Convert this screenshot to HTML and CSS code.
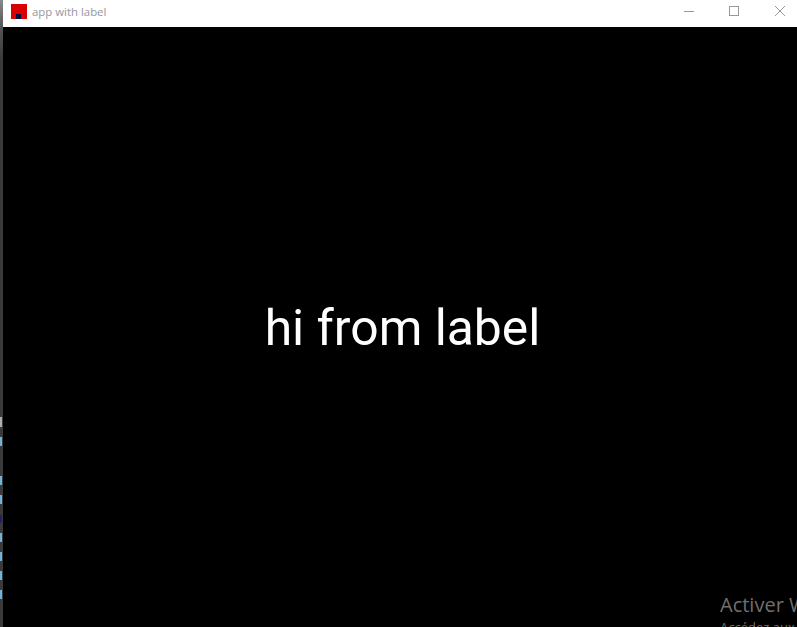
FILE: index.html
```html
<!DOCTYPE html>
<html lang="en">
<head>
<meta charset="utf-8">
<title>app with label</title>
<link rel="stylesheet" href="styles.css">
</head>
<body>
<div class="desktop-strip">
  <span class="mark mark-1"></span>
  <span class="mark mark-2"></span>
  <span class="mark mark-3"></span>
  <span class="mark mark-4"></span>
  <span class="mark mark-5"></span>
  <span class="mark mark-6"></span>
  <span class="mark mark-7"></span>
  <span class="mark mark-8"></span>
  <span class="mark mark-9"></span>
</div>
<div class="window">
  <header class="titlebar">
    <svg class="app-icon" width="16" height="15" viewBox="0 0 16 15"><rect width="16" height="15" fill="#d80000"/><rect x="5" y="10" width="5" height="5" fill="#0a0a40"/></svg>
    <span class="title">app with label</span>
    <div class="controls">
      <svg class="ctl-min" width="12" height="12" viewBox="0 0 12 12"><path d="M1 6.5h10" stroke="#999" fill="none"/></svg>
      <svg width="12" height="12" viewBox="0 0 12 12"><rect x="1.5" y="1.5" width="9" height="9" stroke="#999" fill="none"/></svg>
      <svg width="12" height="12" viewBox="0 0 12 12"><path d="M1 1l10 10M11 1L1 11" stroke="#999" fill="none"/></svg>
    </div>
  </header>
  <main class="content">
    <span class="label">hi from label</span>
    <div class="watermark">
      <div class="wm-head">Activer Windows</div>
      <div class="wm-sub">Accédez aux paramètres</div>
    </div>
  </main>
</div>
</body>
</html>
```
FILE: styles.css
```css
html, body {
  margin: 0;
  height: 100%;
  overflow: hidden;
  background: #000;
}
body {
  display: flex;
  width: 797px;
  height: 627px;
  font-family: Roboto, sans-serif;
}
.desktop-strip {
  width: 3px;
  flex: none;
  background: linear-gradient(180deg, #8a8a8a 0, #555 27px, #3a3a38 60px);
  position: relative;
}
.mark {
  position: absolute;
  left: 0;
  width: 2px;
  height: 9px;
  background: linear-gradient(90deg, #6fb0d8 50%, #d8a050 50%);
}
.mark-1 { top: 417px; height: 10px; background: #a8b0b8; }
.mark-2 { top: 437px; }
.mark-3 { top: 476px; }
.mark-4 { top: 495px; }
.mark-5 { top: 515px; height: 8px; background: #23235f; }
.mark-6 { top: 533px; }
.mark-7 { top: 552px; }
.mark-8 { top: 571px; }
.mark-9 { top: 590px; }
.window {
  flex: 1;
  display: flex;
  flex-direction: column;
  min-width: 0;
}
.titlebar {
  box-sizing: border-box;
  height: 27px;
  flex: none;
  background: #fff;
  display: flex;
  align-items: center;
  padding: 0 0 5px 8px;
}
.app-icon {
  flex: none;
  margin: 1px 5px 0 0;
}
.title {
  font-family: "Open Sans", sans-serif;
  font-size: 11.4px;
  color: #99949c;
}
.controls {
  margin-left: auto;
  display: flex;
  gap: 34px;
  padding-right: 11px;
}
.ctl-min {
  margin-right: -1px;
}
.content {
  flex: 1;
  position: relative;
  background: #000;
  display: flex;
  align-items: center;
  justify-content: center;
  overflow: hidden;
  padding: 4px 0 0 5px;
}
.label {
  color: #fff;
  font-size: 49.8px;
  line-height: 1;
  white-space: nowrap;
}
.watermark {
  position: absolute;
  left: 717px;
  top: 565px;
  white-space: nowrap;
  color: #6f6f6f;
}
.wm-head {
  font-family: "Open Sans", sans-serif;
  font-size: 20px;
  line-height: 26px;
}
.wm-sub {
  font-family: "Open Sans", sans-serif;
  font-size: 13px;
  line-height: 18px;
}
```
